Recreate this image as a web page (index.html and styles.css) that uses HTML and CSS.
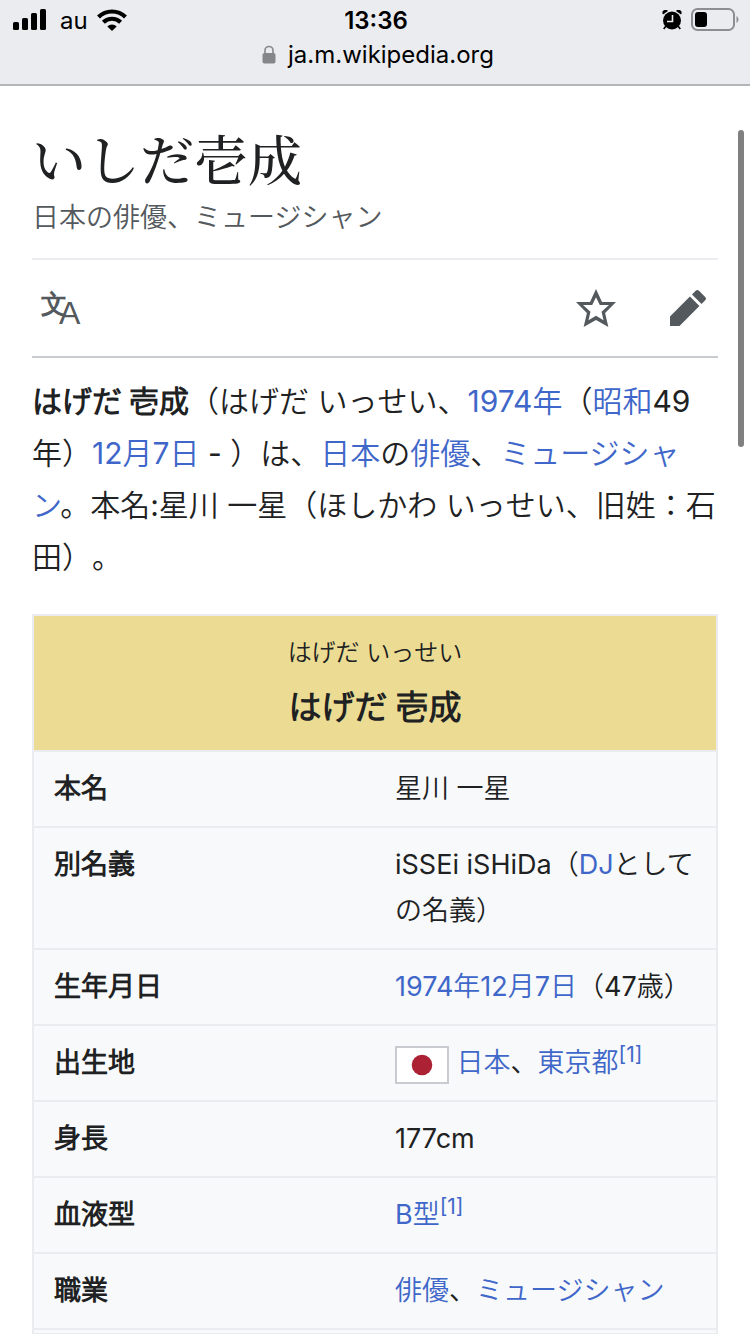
FILE: index.html
```html
<!DOCTYPE html>
<html lang="ja">
<head>
    <meta charset="UTF-8">
    <meta name="viewport" content="width=device-width, initial-scale=1.0">
    <title>いしだ壱成</title>
    <link rel="stylesheet" href="styles.css">
</head>
<body>
    <header class="browser-bar">
        <div class="status">
            <div class="status-left">
                <svg width="34" height="22" viewBox="0 0 34 22">
                    <rect x="0" y="13" width="6" height="8" rx="1.5"/>
                    <rect x="9" y="9" width="6" height="12" rx="1.5"/>
                    <rect x="18" y="4" width="6" height="17" rx="1.5"/>
                    <rect x="27" y="0" width="6" height="21" rx="1.5"/>
                </svg>
                <span class="carrier">au</span>
                <svg width="30" height="22" viewBox="0 0 30 22" fill="none" stroke="#000" stroke-width="4.2">
                    <path d="M1.500 8a19.300 19.300 0 0 1 27 0"/>
                    <path d="M6.400 13.300a12.200 12.200 0 0 1 17.200 0"/>
                    <path d="M15 22l-4.700-4.600a6.800 6.800 0 0 1 9.400 0z" fill="#000" stroke="none"/>
                </svg>
            </div>
            <time class="clock">13:36</time>
            <div class="status-right">
                <svg width="20" height="20" viewBox="0 0 20 20">
                    <circle cx="10" cy="10.500" r="9"/>
                    <path d="M1 4.500a3 3 0 0 1 5-3.400zM19 4.500a3 3 0 0 0-5-3.400z"/>
                    <path d="M4 16l-2.300 3M16 16l2.300 3" stroke="#000" stroke-width="1.600"/>
                    <path d="M10.500 5v6.500H5" fill="none" stroke="#ebecf0" stroke-width="1.600"/>
                </svg>
                <svg width="48" height="24" viewBox="0 0 48 24">
                    <rect x="1" y="1" width="42" height="21" rx="5.500" fill="none" stroke="#8e8e90" stroke-width="2"/>
                    <rect x="4" y="4" width="12" height="15" rx="3"/>
                    <path d="M45.500 8c2.600 1.500 2.600 5.500 0 7z" fill="#8e8e90"/>
                </svg>
            </div>
        </div>
        <div class="address">
            <svg width="14" height="19" viewBox="0 0 14 19">
                <rect x="0.500" y="8" width="13" height="10.500" rx="2" fill="#85868a"/>
                <path d="M3 9V5.500a4 4 0 0 1 8 0V9" fill="none" stroke="#85868a" stroke-width="1.600"/>
            </svg>
            <span>ja.m.wikipedia.org</span>
        </div>
    </header>
    <div class="scroll-thumb"></div>

    <main class="content">
        <h1 class="title">いしだ壱成</h1>
        <p class="tagline">日本の俳優、ミュージシャン</p>

        <nav class="actions">
            <button type="button" class="action" aria-label="言語">
                <svg class="language-icon" width="44" height="52" viewBox="0 0 44 52">
                    <text x="1" y="31" font-size="26">文</text>
                    <text class="language-latin" x="19" y="42" font-size="32">A</text>
                </svg>
            </button>
            <button type="button" class="action action-watch" aria-label="ウォッチ">
                <svg width="40" height="40" viewBox="0 0 20 20">
                    <path fill="#54595d" d="M20 7h-7L10 .5 7 7H0l5.460 5.470-1.640 7L10 16l6.180 3.500-1.630-7zm-10 6.900l-3.760 2.270 1-4.280L3.500 8.500h4.610L10 4.600l1.900 3.900h4.600l-3.730 3.400 1 4.280z"/>
                </svg>
            </button>
            <button type="button" class="action" aria-label="編集">
                <svg width="40" height="40" viewBox="0 0 20 20">
                    <path fill="#54595d" d="M16.770 8l1.940-2a1 1 0 0 0 0-1.410l-3.340-3.300a1 1 0 0 0-1.410 0L12 3.230zM1 14.250V19h4.750l9.960-9.960-4.750-4.750z"/>
                </svg>
            </button>
        </nav>

        <p class="lead"><b>はげだ 壱成</b>（はげだ いっせい、<a href="#">1974年</a>（<a href="#">昭和</a>49年）<a href="#">12月7日</a> - ）は、<a href="#">日本</a>の<a href="#">俳優</a>、<a href="#">ミュージシャン</a>。本名:星川 一星（ほしかわ いっせい、旧姓：石田）。</p>

        <table class="infobox">
            <tr>
                <th colspan="2" class="infobox-title">
                    <div class="ruby">はげだ いっせい</div>
                    <div class="name">はげだ 壱成</div>
                </th>
            </tr>
            <tr>
                <th scope="row">本名</th>
                <td>星川 一星</td>
            </tr>
            <tr>
                <th scope="row">別名義</th>
                <td>iSSEi iSHiDa（<a href="#">DJ</a>としての名義）</td>
            </tr>
            <tr>
                <th scope="row">生年月日</th>
                <td><a href="#">1974年</a><a href="#">12月7日</a>（47歳）</td>
            </tr>
            <tr>
                <th scope="row">出生地</th>
                <td><svg class="flag" width="54" height="38" viewBox="0 0 54 38"><rect x="1" y="1" width="52" height="36" fill="#fff" stroke="#c8ccd1" stroke-width="2"/><circle cx="27" cy="19" r="10.300" fill="#ac2133"/></svg> <a href="#">日本</a>、<a href="#">東京都</a><sup><a href="#">[1]</a></sup></td>
            </tr>
            <tr>
                <th scope="row">身長</th>
                <td>177cm</td>
            </tr>
            <tr>
                <th scope="row">血液型</th>
                <td><a href="#">B型</a><sup><a href="#">[1]</a></sup></td>
            </tr>
            <tr>
                <th scope="row">職業</th>
                <td><a href="#">俳優</a>、<a href="#">ミュージシャン</a></td>
            </tr>
            <tr class="infobox-rest">
                <td colspan="2"></td>
            </tr>
        </table>
    </main>
</body>
</html>
```
FILE: styles.css
```css
* {
    box-sizing: border-box;
}

body {
    margin: 0;
    background-color: #fff;
    color: #202122;
    font-family: Inter, "Noto Sans CJK JP DemiLight", "Noto Sans CJK JP", sans-serif;
    text-spacing-trim: space-all;
}

a {
    color: #3f67c9;
    text-decoration: none;
}

svg {
    display: block;
}

.browser-bar {
    height: 86px;
    background-color: #ebecf0;
    border-bottom: 2px solid #b4b5b9;
    color: #000;
}

.status {
    display: grid;
    grid-template-columns: 1fr auto 1fr;
    align-items: center;
    height: 40px;
    padding: 0 11px 0 13px;
}

.status-left, .status-right {
    display: flex;
    align-items: center;
}

.status-left {
    gap: 9px;
}

.status-right {
    justify-content: flex-end;
    gap: 9px;
}

.carrier {
    font-size: 24px;
    margin-left: 4px;
}

.clock {
    font-size: 24px;
    font-weight: 600;
}

.address {
    display: flex;
    justify-content: center;
    align-items: center;
    gap: 12px;
    height: 28px;
    padding-left: 6px;
    font-size: 24px;
}

.scroll-thumb {
    position: fixed;
    top: 130px;
    right: 6px;
    width: 6px;
    height: 317px;
    border-radius: 3px;
    background-color: #808080;
}

.content {
    padding: 42px 32px 0;
}

.title {
    margin: 0;
    font-family: "Liberation Serif", "Noto Serif CJK JP", "Noto Sans CJK JP", serif;
    font-size: 54px;
    font-weight: 500;
    line-height: 70px;
}

.tagline {
    margin: 0;
    padding-bottom: 20px;
    border-bottom: 2px solid #eaecf0;
    color: #54595d;
    font-size: 27px;
    line-height: 40px;
}

.actions {
    display: flex;
    align-items: center;
    height: 98px;
    padding: 0 10px 0 8px;
    border-bottom: 2px solid #c8ccd1;
}

.action {
    padding: 0;
    border: none;
    background: none;
    cursor: pointer;
}

.action-watch {
    margin-left: auto;
    margin-right: 52px;
}

.language-icon {
    fill: #54595d;
    font-weight: 600;
}

.language-latin {
    font-weight: 500;
}

.lead {
    margin: 17px 0 31px;
    font-size: 30px;
    line-height: 52px;
}

.infobox {
    width: 100%;
    table-layout: fixed;
    border-collapse: collapse;
    border: 2px solid #eaecf0;
    background-color: #f8f9fa;
    font-size: 27px;
    line-height: 46px;
}

.infobox th, .infobox td {
    padding: 14px 20px;
    border-bottom: 2px solid #eaecf0;
    text-align: left;
    vertical-align: top;
}

.infobox .infobox-title {
    padding: 14px 20px 12px;
    background-color: #ecdc93;
    text-align: center;
}

.ruby {
    font-size: 24px;
    font-weight: 400;
}

.name {
    font-size: 33px;
    line-height: 62px;
}

.infobox .infobox-rest td {
    height: 5px;
    padding: 0;
    border-bottom: none;
}

.flag {
    display: inline-block;
    vertical-align: middle;
}

sup {
    font-size: 21px;
    line-height: 1;
}
```
